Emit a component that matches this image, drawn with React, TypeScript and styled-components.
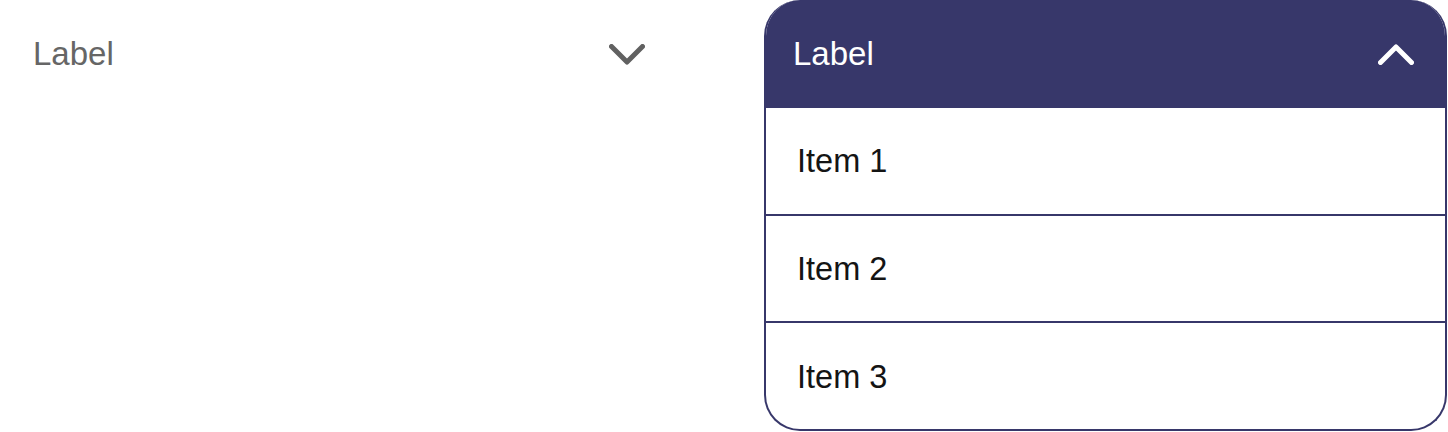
import React from 'react';
import styled, { createGlobalStyle } from 'styled-components';

const navy = '#37376a';

const GlobalStyle = createGlobalStyle`
  html, body {
    margin: 0;
    padding: 0;
    background: #ffffff;
  }
  body {
    font-family: "Liberation Sans", Arial, Helvetica, sans-serif;
  }
`;

const Page = styled.div`
  display: flex;
  align-items: flex-start;
  gap: 84px;
  width: 1448px;
  height: 432px;
`;

const ClosedSelect = styled.div`
  box-sizing: border-box;
  width: 680px;
  height: 108px;
  padding: 0 35px 0 33px;
  display: flex;
  align-items: center;
  justify-content: space-between;
`;

const Label = styled.span<{ $light?: boolean }>`
  font-size: 33px;
  color: ${(p) => (p.$light ? '#ffffff' : '#666666')};
`;

const Panel = styled.div`
  box-sizing: border-box;
  width: 683px;
  height: 431px;
  border: 2px solid ${navy};
  border-top: none;
  border-radius: 36px;
  overflow: hidden;
  display: flex;
  flex-direction: column;
`;

const Header = styled.div`
  height: 108px;
  flex: none;
  background: ${navy};
  padding: 0 31px 0 27px;
  display: flex;
  align-items: center;
  justify-content: space-between;
`;

const Item = styled.div`
  flex: 1;
  display: flex;
  align-items: center;
  padding: 2px 31px 0;
  font-size: 32.5px;
  color: #141414;
  & + & {
    border-top: 2px solid ${navy};
  }
`;

const Chevron = ({ up, color }: { up?: boolean; color: string }) => (
  <svg width="36" height="21" viewBox="0 0 36 21" fill="none">
    <polyline
      points={up ? '2.5,18.5 18,3 33.5,18.5' : '2.5,2.5 18,18 33.5,2.5'}
      stroke={color}
      strokeWidth="5"
      strokeLinecap="round"
      strokeLinejoin="round"
    />
  </svg>
);

const App = () => {
  return (
    <>
      <GlobalStyle />
      <Page>
        <ClosedSelect>
          <Label>Label</Label>
          <Chevron color="#616161" />
        </ClosedSelect>
        <Panel>
          <Header>
            <Label $light>Label</Label>
            <Chevron up color="#ffffff" />
          </Header>
          <Item>Item 1</Item>
          <Item>Item 2</Item>
          <Item>Item 3</Item>
        </Panel>
      </Page>
    </>
  );
};

export default App;
